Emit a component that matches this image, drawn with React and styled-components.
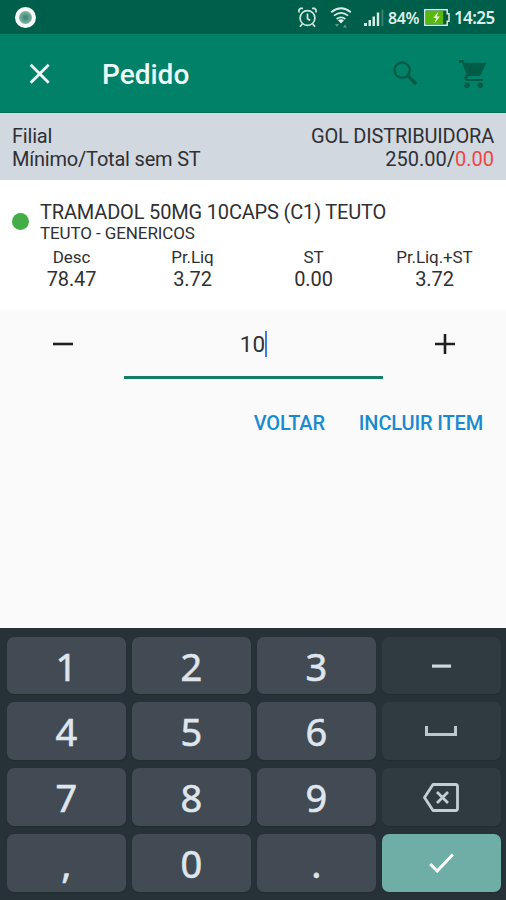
import React from 'react';
import styled, { createGlobalStyle } from 'styled-components';


const GlobalStyle = createGlobalStyle`
  * {
    box-sizing: border-box;
  }
  body {
    margin: 0;
    background-color: #fafafa;
    font-family: Roboto, sans-serif;
    color: #303033;
  }
  button {
    padding: 0;
    border: none;
    background: none;
    font: inherit;
    color: inherit;
    letter-spacing: inherit;
  }
  svg {
    display: block;
    flex-shrink: 0;
  }
`

const Screen = styled.div`
  display: flex;
  flex-direction: column;
  width: 506px;
  height: 900px;
  overflow: hidden;
  white-space: nowrap;
`

const StatusBar = styled.div`
  display: flex;
  justify-content: space-between;
  align-items: center;
  height: 34px;
  padding: 1px 11px 0 15px;
  background-color: #005f4b;
  color: #dcefe9;
`

const RecordDot = styled.div`
  width: 21px;
  height: 21px;
  border: 4px solid #f6fbfa;
  border-radius: 50%;
  background: radial-gradient(#3f8d78 15%, #7bae9f 60%);
`

const StatusIcons = styled.div`
  display: flex;
  align-items: center;
  font-family: 'Noto Sans', sans-serif;
  font-size: 17px;
  font-weight: 600;
  line-height: 20px;
  .alarm {
    margin-right: 13px;
  }
  .wifi {
    margin-right: 11px;
  }
  .signal {
    margin-right: 4px;
  }
  .percent {
    width: 34px;
    padding-top: 1px;
    font-size: 16px;
    letter-spacing: -0.4px;
  }
  .battery {
    margin: 0 4px 0 2px;
  }
  .clock {
    width: 41px;
    padding-top: 1px;
    letter-spacing: -0.6px;
  }
`

const AppBar = styled.header`
  display: flex;
  align-items: center;
  height: 79px;
  padding: 1px 19px 0 29px;
  background-color: #008168;
  border-bottom: 1px solid #007059;
  h1 {
    flex: 1;
    margin: 1px 0 0 52px;
    color: #eefaf7;
    font-size: 28px;
    font-weight: 500;
  }
  .search {
    margin-right: 41px;
  }
`

const Summary = styled.section`
  height: 67px;
  padding: 12px 12px 0;
  background-color: #d1d8e0;
  font-size: 20px;
  line-height: 23px;
  letter-spacing: -0.2px;
`

const SummaryRow = styled.div`
  display: flex;
  justify-content: space-between;
  .total {
    letter-spacing: 0;
  }
  .negative {
    color: #ee4740;
  }
`

const Item = styled.section`
  height: 130px;
  padding-top: 20px;
  background-color: #ffffff;
`

const ItemHead = styled.div`
  display: flex;
  align-items: center;
  gap: 11px;
  padding-left: 12px;
`

const Dot = styled.div`
  width: 17px;
  height: 17px;
  border-radius: 50%;
  background-color: #43ae48;
`

const ItemName = styled.div`
  font-size: 20px;
  line-height: 24px;
  letter-spacing: -0.17px;
`

const Maker = styled.div`
  font-size: 17px;
  line-height: 18px;
  letter-spacing: -0.1px;
`

const Prices = styled.div`
  display: grid;
  grid-template-columns: repeat(4, 1fr);
  margin-top: 5px;
  padding: 0 11px;
  text-align: center;
`

const Price = styled.div`
  .label {
    font-size: 17px;
    line-height: 21px;
    letter-spacing: -0.1px;
  }
  .value {
    font-size: 20px;
    line-height: 22px;
    letter-spacing: -0.1px;
  }
`

const Quantity = styled.section`
  display: flex;
  justify-content: space-between;
  height: 69px;
  padding-left: 1px;
`

const StepButton = styled.button`
  display: flex;
  justify-content: center;
  width: 123px;
  height: 68px;
  padding-top: 24px;
`

const Field = styled.div`
  display: flex;
  justify-content: center;
  align-items: center;
  width: 259px;
  height: 69px;
  padding-top: 2px;
  border-bottom: 3px solid #147e62;
  font-size: 22.5px;
`

const Caret = styled.span`
  width: 2px;
  height: 26px;
  background-color: #3c7fe0;
`

const Actions = styled.div`
  display: flex;
  justify-content: flex-end;
  gap: 34px;
  padding: 31px 23px 0 0;
  color: #1a8ad0;
  font-size: 20px;
  font-weight: 500;
  line-height: 26px;
  letter-spacing: -0.15px;
`

const Keypad = styled.div`
  display: grid;
  grid-template-columns: repeat(4, 118.5px);
  grid-template-rows: 57px 58px 58px 58px;
  gap: 8px 6.5px;
  height: 272px;
  margin-top: auto;
  padding: 9px 5px 8px 7px;
  background-color: #263238;
`

const keyColors = {
  digit: '#424b53',
  action: '#2f3b41',
  confirm: '#6fada7',
}

const Key = styled.button`
  display: flex;
  justify-content: center;
  align-items: center;
  border-radius: 7px;
  background-color: ${({ $kind }) => keyColors[$kind]};
  box-shadow: 0 1px 1px #222c31;
  color: #dfe5ec;
  font-family: 'Noto Sans', sans-serif;
  font-size: 38px;
  line-height: 56px;
  -webkit-text-stroke: 0.6px #dfe5ec;
`

const AlarmIcon = () => (
  <svg className='alarm' width='19' height='21' viewBox='0 0 19 21' fill='none' stroke='#cfe9e0' strokeWidth='1.7'>
    <circle cx='9.5' cy='11' r='7.4' />
    <path d='M9.5 6.5v5l2.6 2M1 5.5V2.8L2.5 1.3H5M18 5.5V2.8l-1.5-1.5H14M4.3 17l-2.3 2.8M14.7 17l2.3 2.8' />
  </svg>
)

const WifiIcon = () => (
  <svg className='wifi' width='22' height='21' viewBox='0 0 22 21' fill='none' stroke='#d5ebe4' strokeWidth='1.8'>
    <path d='M1.2 5.2Q11-2.6 20.8 5.2M3.9 8.6q7.1-5.5 14.2 0M6.6 12q4.4-3.4 8.8 0' />
    <path d='M8 13.2q3-2 6 0L11 16.5z' fill='#e6f4ef' stroke='none' />
    <path d='M5 17h4l-2 3zM13 20.5l2-3 2 3z' fill='#579c89' stroke='none' />
  </svg>
)

const SignalIcon = () => (
  <svg className='signal' width='21' height='18' viewBox='0 0 21 18' fill='#d5ebe4'>
    <path d='M1 14h3v3H1zM5.5 11h2.5v6H5.5zM9.5 7.5H12V17H9.5zM13.8 3.5h2.4V17h-2.4z' />
    <path d='M18.5 0.5h1.8V17h-1.8z' fill='#3b8571' />
  </svg>
)

const BatteryIcon = () => (
  <svg className='battery' width='26' height='17' viewBox='0 0 26 17'>
    <path d='M.8.8h22.4v4H25v7.4h-1.8v4H.8z' fill='#075a38' stroke='#d7eae3' strokeWidth='1.5' />
    <path d='M1.8 1.8h17.4v13.4H1.8z' fill='#58b80d' />
    <path d='M14.3 2.7L9.2 9h3.1l-1.8 5.2L16 7.6h-3.2z' fill='#ecf6d9' />
  </svg>
)

const CloseIcon = () => (
  <svg width='21' height='21' viewBox='0 0 21 21' stroke='#f0fbf8' strokeWidth='2.8'>
    <path d='M1.7 1.7l18 18M19.7 1.7l-18 18' />
  </svg>
)

const SearchIcon = () => (
  <svg className='search' width='25' height='25' viewBox='0 0 26 26' fill='none' stroke='#005b47' strokeWidth='2.5'>
    <circle cx='9.5' cy='9.5' r='7.9' />
    <path d='M15 15l9.2 9.2' strokeWidth='3.4' />
  </svg>
)

const CartIcon = () => (
  <svg width='28' height='28' viewBox='1 2 21 20' preserveAspectRatio='none' fill='#005b47'>
    <path d='M1 2v2h2l3.600 7.600-1.350 2.400c-.7 1.300.2 3 1.750 3h12v-1.500H7.400c-.3 0-.3-.3-.2-.5l.9-1.500h7.450c.75 0 1.400-.4 1.750-1l4.300-8.500H5.200L4.270 2z' />
    <circle cx='7' cy='20' r='2' />
    <circle cx='17' cy='20' r='2' />
  </svg>
)

const MinusIcon = () => (
  <svg width='20' height='20' viewBox='0 0 20 20' stroke='#1f1f1f' strokeWidth='2.6'>
    <path d='M0 10h20' />
  </svg>
)

const PlusIcon = () => (
  <svg width='20' height='20' viewBox='0 0 20 20' stroke='#1f1f1f' strokeWidth='2.6'>
    <path d='M0 10h20M10 0v20' />
  </svg>
)

const DashIcon = () => (
  <svg width='19' height='4' viewBox='0 0 19 4' fill='#cfd8de'>
    <path d='M0 .5h19v3.200H0z' />
  </svg>
)

const SpaceIcon = () => (
  <svg width='32' height='10' viewBox='0 0 32 10' fill='none' stroke='#bdc6cc' strokeWidth='3'>
    <path d='M1.5 0v8.5h29V0' />
  </svg>
)

const BackspaceIcon = () => (
  <svg width='36' height='29' viewBox='0 0 36 29' fill='none' stroke='#c6ced4' strokeWidth='2.8' strokeLinejoin='round'>
    <path d='M10 1.5h22.5q2 0 2 2v22q0 2-2 2H10L1.5 14.5z' />
    <path d='M14 9l11 11M25 9L14 20' />
  </svg>
)

const CheckIcon = () => (
  <svg width='25' height='20' viewBox='0 0 25 20' fill='none' stroke='#ffffff' strokeWidth='3'>
    <path d='M1.2 11l7 7L23.8 1.5' />
  </svg>
)

const prices = [
  { label: 'Desc', value: '78.47' },
  { label: 'Pr.Liq', value: '3.72' },
  { label: 'ST', value: '0.00' },
  { label: 'Pr.Liq.+ST', value: '3.72' },
]

const keys = [
  { face: '1' }, { face: '2' }, { face: '3' }, { face: <DashIcon />, kind: 'action' },
  { face: '4' }, { face: '5' }, { face: '6' }, { face: <SpaceIcon />, kind: 'action' },
  { face: '7' }, { face: '8' }, { face: '9' }, { face: <BackspaceIcon />, kind: 'action' },
  { face: ',' }, { face: '0' }, { face: '.' }, { face: <CheckIcon />, kind: 'confirm' },
]

const App = () => {
  return (
    <Screen>
      <GlobalStyle />
      <StatusBar>
        <RecordDot />
        <StatusIcons>
          <AlarmIcon />
          <WifiIcon />
          <SignalIcon />
          <span className='percent'>84%</span>
          <BatteryIcon />
          <span className='clock'>14:25</span>
        </StatusIcons>
      </StatusBar>
      <AppBar>
        <CloseIcon />
        <h1>Pedido</h1>
        <SearchIcon />
        <CartIcon />
      </AppBar>
      <Summary>
        <SummaryRow>
          <span>Filial</span>
          <span>GOL DISTRIBUIDORA</span>
        </SummaryRow>
        <SummaryRow>
          <span>Mínimo/Total sem ST</span>
          <span className='total'>250.00/<span className='negative'>0.00</span></span>
        </SummaryRow>
      </Summary>
      <Item>
        <ItemHead>
          <Dot />
          <div>
            <ItemName>TRAMADOL 50MG 10CAPS (C1) TEUTO</ItemName>
            <Maker>TEUTO - GENERICOS</Maker>
          </div>
        </ItemHead>
        <Prices>
          {prices.map(({ label, value }) => (
            <Price key={label}>
              <div className='label'>{label}</div>
              <div className='value'>{value}</div>
            </Price>
          ))}
        </Prices>
      </Item>
      <Quantity>
        <StepButton><MinusIcon /></StepButton>
        <Field>10<Caret /></Field>
        <StepButton><PlusIcon /></StepButton>
      </Quantity>
      <Actions>
        <button>VOLTAR</button>
        <button>INCLUIR ITEM</button>
      </Actions>
      <Keypad>
        {keys.map(({ face, kind = 'digit' }, i) => (
          <Key key={i} $kind={kind}>{face}</Key>
        ))}
      </Keypad>
    </Screen>
  )
}

export default App
